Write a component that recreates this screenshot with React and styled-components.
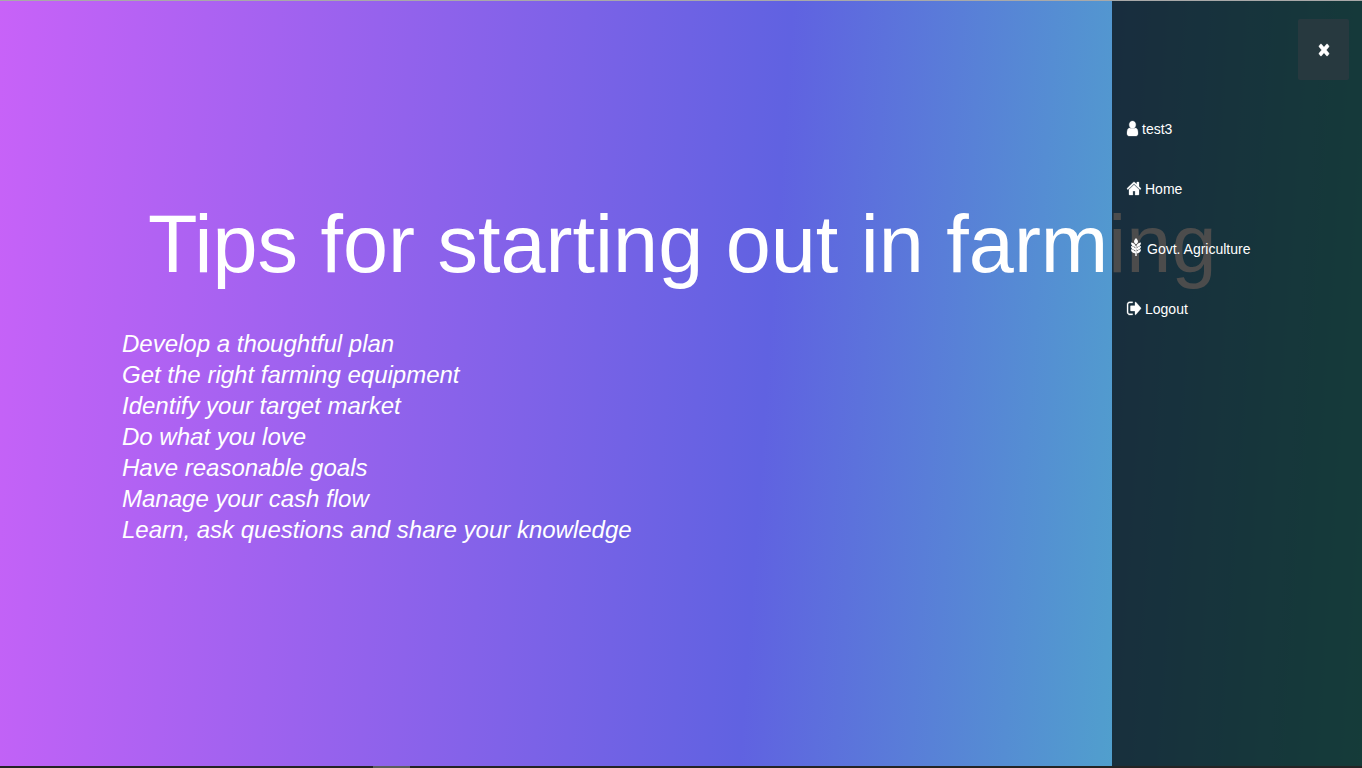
import React from "react";
import styled, { createGlobalStyle } from "styled-components";

const GlobalStyle = createGlobalStyle`
  *, *::before, *::after { box-sizing: border-box; }
  body {
    margin: 0;
    font-family: "Liberation Sans", Arial, sans-serif;
    color: #fff;
  }
`;

const Page = styled.div`
  position: relative;
  min-height: 100vh;
  display: flex;
  flex-direction: column;
  overflow: hidden;
  border-top: 1px solid #a9a9a9;
  background: linear-gradient(94deg, #c862f8 0%, #6062e1 56%, #46c8c0 100%);
`;

const Content = styled.main`
  flex: 1;
  padding: 187px 122px 0;
`;

const Title = styled.h1`
  margin: 0;
  padding-left: 26px;
  font-size: 81px;
  line-height: 112px;
  font-weight: 400;
  white-space: nowrap;
`;

const Tips = styled.ul`
  margin: 28px 0 0;
  padding: 0;
  list-style: none;
  font-size: 24px;
  line-height: 31px;
  font-style: italic;
`;

const Sidebar = styled.aside`
  position: absolute;
  top: 0;
  right: 0;
  bottom: 0;
  width: 250px;
  padding: 18px 13px;
  display: flex;
  flex-direction: column;
  background: rgba(0, 0, 0, 0.7);
`;

const CloseButton = styled.button`
  align-self: flex-end;
  width: 51px;
  height: 61px;
  display: flex;
  align-items: center;
  justify-content: center;
  border: 0;
  border-radius: 2px;
  background: #27393f;
  color: #fff;
`;

const Menu = styled.nav`
  margin-top: 18px;
  display: flex;
  flex-direction: column;
`;

const MenuLink = styled.a`
  display: flex;
  align-items: center;
  gap: 4px;
  height: 60px;
  padding-left: 2px;
  color: #fff;
  font-size: 14px;
  text-decoration: none;
`;

const Label = styled.span`
  padding-top: 2px;
`;

const Icon = styled.svg`
  display: block;
  overflow: visible;
  fill: currentColor;
  stroke: currentColor;
`;

const BottomBar = styled.footer`
  position: relative;
  height: 2px;
  padding-left: 373px;
  background: #242424;
`;

const BarThumb = styled.div`
  width: 37px;
  height: 2px;
  background: #5c5c5c;
`;

const icons = {
  user: {
    box: "256 128 1280 1536", width: 11, height: 15, stroke: 30,
    d: "M1536 1399q0 109-62.5 187t-150.5 78h-854q-88 0-150.5-78t-62.5-187q0-85 8.5-160.5t31.5-152 58.5-131 94-89 134.5-34.5q131 80 313 80t313-80q76 0 134.5 34.5t94 89 58.5 131 31.5 152 8.5 160.5zm-256-887q0 159-112.5 271.5t-271.5 112.5-271.5-112.5-112.5-271.5 112.5-271.5 271.5-112.5 271.5 112.5 112.5 271.5z",
  },
  home: {
    box: "89 250 1614 1286", width: 14, height: 13, stroke: 30,
    d: "M1472 992v480q0 26-19 45t-45 19h-384v-384h-256v384h-384q-26 0-45-19t-19-45v-480q0-1 .5-3t.5-3l575-474 575 474q1 2 1 6zm223-69l-62 74q-8 9-21 11h-3q-13 0-21-7l-692-577-692 577q-12 8-24 7-13-2-21-11l-62-74q-8-10-7-23.5t11-21.5l719-599q32-26 76-26t76 26l244 204v-195q0-14 9-23t23-9h192q14 0 23 9t9 23v408l219 182q10 8 11 21.5t-7 23.5z",
  },
  grain: {
    box: "-1 0 16 20", width: 16, height: 20, stroke: 0,
    d: "M8 0Q11 3 9.500 5L8 6.500L6.500 5Q5 3 8 0ZM7.700 9Q3 8.500 3 4.500Q7.700 5.300 7.700 9ZM8.300 9Q13 8.500 13 4.500Q8.300 5.300 8.300 9ZM7.700 12.300Q3 11.800 3 8Q7.700 8.700 7.700 12.300ZM8.300 12.300Q13 11.800 13 8Q8.300 8.700 8.300 12.300ZM7.700 15.600Q3 15 3 11.300Q7.700 12 7.700 15.600ZM8.300 15.600Q13 15 13 11.300Q8.300 12 8.300 15.600ZM7.300 8h1.400v10h-1.400Z",
  },
  logout: {
    box: "64 288 1568 1248", width: 14, height: 13, stroke: 30,
    d: "M704 1440q0 4 1 20t.5 26.500-3 23.500-10 19.500-20.500 6.500h-320q-119 0-203.500-84.500t-84.500-203.500v-704q0-119 84.500-203.500t203.500-84.500h320q13 0 22.500 9.500t9.500 22.500q0 4 1 20t.5 26.500-3 23.500-10 19.500-20.500 6.500h-320q-66 0-113 47t-47 113v704q0 66 47 113t113 47h312l11.500 1 11.500 3 8 5.500 7 9 2 13.500zm928-544q0 26-19 45l-544 544q-19 19-45 19t-45-19-19-45v-288h-448q-26 0-45-19t-19-45v-384q0-26 19-45t45-19h448v-288q0-26 19-45t45-19 45 19l544 544q19 19 19 45z",
  },
  close: {
    box: "302 366 1188 1188", width: 10, height: 12, stroke: 50,
    d: "M1490 1322q0 40-28 68l-136 136q-28 28-68 28t-68-28l-294-294-294 294q-28 28-68 28t-68-28l-136-136q-28-28-28-68t28-68l294-294-294-294q-28-28-28-68t28-68l136-136q28-28 68-28t68 28l294 294 294-294q28-28 68-28t68 28l136 136q28 28 28 68t-28 68l-294 294 294 294q28 28 28 68z",
  },
};

function Glyph({ name }) {
  const { box, width, height, stroke, d } = icons[name];
  return (
    <Icon
      viewBox={box}
      width={width}
      height={height}
      strokeWidth={stroke}
      preserveAspectRatio="none"
      aria-hidden="true"
    >
      <path d={d} />
    </Icon>
  );
}

const links = [
  ["user", "test3"],
  ["home", "Home"],
  ["grain", "Govt. Agriculture"],
  ["logout", "Logout"],
];

const tips = [
  "Develop a thoughtful plan",
  "Get the right farming equipment",
  "Identify your target market",
  "Do what you love",
  "Have reasonable goals",
  "Manage your cash flow",
  "Learn, ask questions and share your knowledge",
];

export default function App() {
  return (
    <>
      <GlobalStyle />
      <Page>
        <Content>
          <Title>Tips for starting out in farming</Title>
          <Tips>
            {tips.map((tip) => <li key={tip}>{tip}</li>)}
          </Tips>
        </Content>
        <Sidebar>
          <CloseButton type="button" aria-label="Close menu">
            <Glyph name="close" />
          </CloseButton>
          <Menu>
            {links.map(([icon, label]) => (
              <MenuLink key={label} href="#">
                <Glyph name={icon} />
                <Label>{label}</Label>
              </MenuLink>
            ))}
          </Menu>
        </Sidebar>
        <BottomBar>
          <BarThumb />
        </BottomBar>
      </Page>
    </>
  );
}
